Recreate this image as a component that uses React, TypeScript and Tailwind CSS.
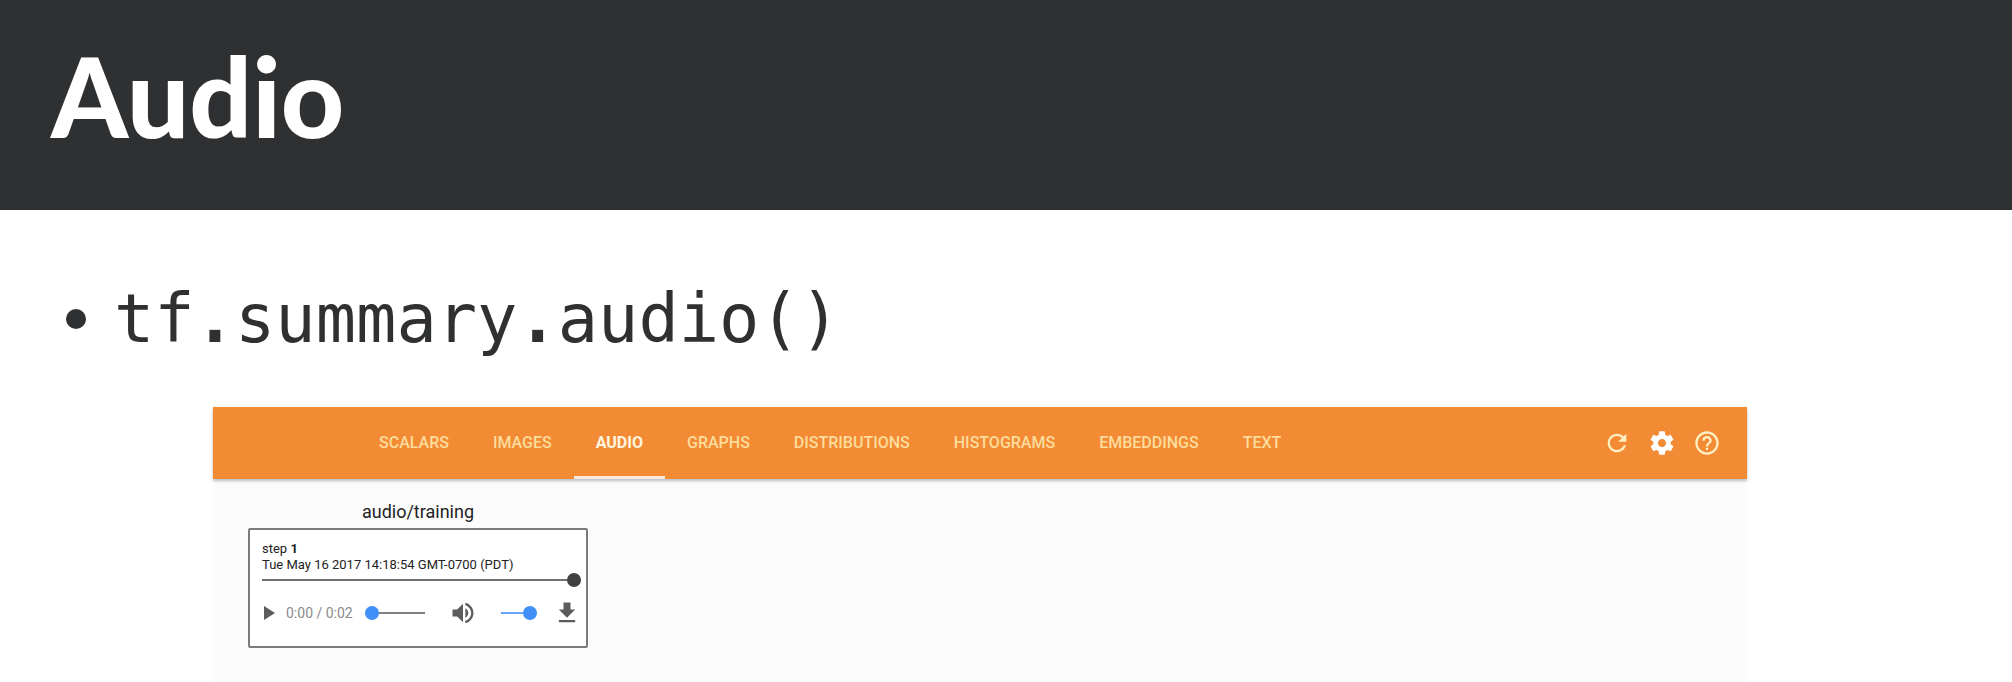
import React from "react";

const tabs = [
  "SCALARS",
  "IMAGES",
  "AUDIO",
  "GRAPHS",
  "DISTRIBUTIONS",
  "HISTOGRAMS",
  "EMBEDDINGS",
  "TEXT",
];

function Icon({ d, className }: { d: string; className: string }) {
  return (
    <svg viewBox="0 0 24 24" fill="currentColor" aria-hidden="true" className={className}>
      <path d={d} />
    </svg>
  );
}

const icons = {
  refresh:
    "M17.65 6.35C16.2 4.9 14.21 4 12 4c-4.42 0-7.99 3.58-7.99 8s3.57 8 7.99 8c3.73 0 6.84-2.55 7.73-6h-2.08c-.82 2.33-3.04 4-5.65 4-3.31 0-6-2.69-6-6s2.69-6 6-6c1.66 0 3.14.69 4.22 1.78L13 11h7V4l-2.35 2.35z",
  settings:
    "M19.43 12.98c.04-.32.07-.64.07-.98s-.03-.66-.07-.98l2.11-1.65c.19-.15.24-.42.12-.64l-2-3.46c-.12-.22-.39-.3-.61-.22l-2.49 1c-.52-.4-1.08-.73-1.69-.98l-.38-2.65C14.46 2.18 14.25 2 14 2h-4c-.25 0-.46.18-.49.42l-.38 2.65c-.61.25-1.17.59-1.69.98l-2.49-1c-.23-.09-.49 0-.61.22l-2 3.46c-.13.22-.07.49.12.64l2.11 1.65c-.04.32-.07.65-.07.98s.03.66.07.98l-2.11 1.65c-.19.15-.24.42-.12.64l2 3.46c.12.22.39.3.61.22l2.49-1c.52.4 1.08.73 1.69.98l.38 2.65c.03.24.24.42.49.42h4c.25 0 .46-.18.49-.42l.38-2.65c.61-.25 1.17-.59 1.69-.98l2.49 1c.23.09.49 0 .61-.22l2-3.46c.12-.22.07-.49-.12-.64l-2.11-1.65zM12 15.5c-1.93 0-3.5-1.57-3.5-3.5s1.57-3.5 3.5-3.5 3.5 1.57 3.5 3.5-1.57 3.5-3.5 3.5z",
  help: "M11 18h2v-2h-2v2zm1-16C6.48 2 2 6.48 2 12s4.48 10 10 10 10-4.48 10-10S17.52 2 12 2zm0 18c-4.41 0-8-3.59-8-8s3.59-8 8-8 8 3.59 8 8-3.59 8-8 8zm0-14c-2.21 0-4 1.79-4 4h2c0-1.1.9-2 2-2s2 .9 2 2c0 2-3 1.75-3 5h2c0-2.25 3-2.5 3-5 0-2.21-1.79-4-4-4z",
  play: "M8 5v14l11-7z",
  volume:
    "M3 9v6h4l5 5V4L7 9H3zm13.5 3c0-1.77-1.02-3.29-2.5-4.03v8.05c1.48-.73 2.5-2.25 2.5-4.02zM14 3.23v2.06c2.89.86 5 3.54 5 6.71s-2.11 5.85-5 6.71v2.06c4.01-.91 7-4.49 7-8.77s-2.99-7.86-7-8.77z",
  download: "M19 9h-4V3H9v6H5l7 7 7-7zM5 18v2h14v-2H5z",
};

function AudioCard() {
  return (
    <figure className="w-[340px]">
      <figcaption className="text-center text-[18px] leading-6 text-[#222]">audio/training</figcaption>
      <div className="mt-1 h-[120px] rounded-xs border-2 border-[#7a7a7a] bg-white pt-[11px] pl-3 pr-[5px]">
        <p className="text-[13px] leading-4 text-[#222]">
          step <b>1</b>
        </p>
        <p className="text-[13px] leading-4 text-[#222]">Tue May 16 2017 14:18:54 GMT-0700 (PDT)</p>
        <input
          type="range"
          aria-label="Step"
          min={0}
          max={1}
          defaultValue={1}
          className="block h-[14px] w-full appearance-none bg-transparent [&::-webkit-slider-runnable-track]:h-[2px] [&::-webkit-slider-runnable-track]:bg-[#707070] [&::-webkit-slider-thumb]:-mt-[6px] [&::-webkit-slider-thumb]:size-[14px] [&::-webkit-slider-thumb]:appearance-none [&::-webkit-slider-thumb]:rounded-full [&::-webkit-slider-thumb]:bg-[#404040]"
        />
        <div className="mt-3 flex h-7 items-center text-[#5c5c5c]">
          <button type="button" aria-label="Play" className="-ml-[6px]">
            <Icon d={icons.play} className="size-6" />
          </button>
          <span className="ml-[6px] w-[81px] text-[14px] leading-4 text-[#8a8a8a]">0:00 / 0:02</span>
          <input
            type="range"
            aria-label="Position"
            defaultValue={0}
            className="block h-[14px] w-[60px] appearance-none bg-transparent [&::-webkit-slider-runnable-track]:h-[2px] [&::-webkit-slider-runnable-track]:bg-[#808080] [&::-webkit-slider-thumb]:-mt-[6px] [&::-webkit-slider-thumb]:size-[14px] [&::-webkit-slider-thumb]:appearance-none [&::-webkit-slider-thumb]:rounded-full [&::-webkit-slider-thumb]:bg-[#4190f7]"
          />
          <button type="button" aria-label="Mute" className="ml-6">
            <Icon d={icons.volume} className="size-7" />
          </button>
          <input
            type="range"
            aria-label="Volume"
            defaultValue={100}
            className="ml-6 block h-[14px] w-9 appearance-none bg-transparent [&::-webkit-slider-runnable-track]:h-[2px] [&::-webkit-slider-runnable-track]:bg-[#67a6f8] [&::-webkit-slider-thumb]:-mt-[6px] [&::-webkit-slider-thumb]:size-[14px] [&::-webkit-slider-thumb]:appearance-none [&::-webkit-slider-thumb]:rounded-full [&::-webkit-slider-thumb]:bg-[#4190f7]"
          />
          <button type="button" aria-label="Download" className="ml-4">
            <Icon d={icons.download} className="size-7" />
          </button>
        </div>
      </div>
    </figure>
  );
}

export default function App() {
  return (
    <div className="flex min-h-screen flex-col bg-white">
      <header className="flex h-[210px] items-center bg-[#2f3032] pl-[51px]">
        <h1 className="-mt-5 font-['Lato',sans-serif] text-[110px] leading-none font-black text-white">Audio</h1>
      </header>
      <ul className="flex h-[197px] items-start pt-[70px] pl-[66px] text-[#2f3032]">
        <li className="flex items-center gap-7 font-['DejaVu_Sans_Mono',monospace] text-[67px] leading-[78px]">
          <span aria-hidden="true" className="size-5 rounded-full bg-[#2f3032]" />
          <span>
            tf<b>.</b>summary<b>.</b>audio()
          </span>
        </li>
      </ul>
      <section className="mr-[265px] ml-[213px] flex flex-1 flex-col bg-[#fcfcfc] font-['Roboto',sans-serif]">
        <div className="flex h-[72px] items-stretch justify-between bg-[#f28b33] pr-[26px] pl-[144px] shadow-[0_2px_3px_rgba(60,70,100,0.35)]">
          <nav className="flex">
            {tabs.map((tab) => (
              <button
                key={tab}
                type="button"
                className={
                  tab === "AUDIO"
                    ? "border-y-3 border-t-transparent border-b-[#fdebdc] px-[22px] text-[16px] font-bold text-[#fff6e0]"
                    : "border-y-3 border-transparent px-[22px] text-[16px] font-medium text-[#fddc9c]"
                }
              >
                {tab}
              </button>
            ))}
          </nav>
          <div className="flex items-center gap-[17px] text-[#fff0c4]">
            <button type="button" aria-label="Reload">
              <Icon d={icons.refresh} className="size-7" />
            </button>
            <button type="button" aria-label="Settings" className="text-white">
              <Icon d={icons.settings} className="size-7" />
            </button>
            <button type="button" aria-label="Help">
              <Icon d={icons.help} className="size-7" />
            </button>
          </div>
        </div>
        <div className="pt-[21px] pl-[35px]">
          <AudioCard />
        </div>
      </section>
    </div>
  );
}
